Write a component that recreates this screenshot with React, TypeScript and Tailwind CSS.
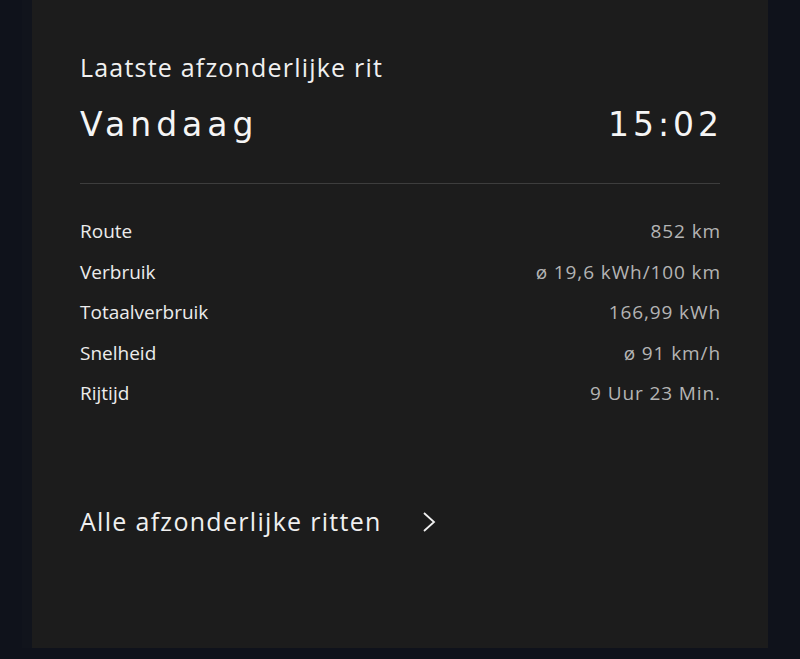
import React from "react";

const rows: [string, string][] = [
  ["Route", "852 km"],
  ["Verbruik", "ø 19,6 kWh/100 km"],
  ["Totaalverbruik", "166,99 kWh"],
  ["Snelheid", "ø 91 km/h"],
  ["Rijtijd", "9 Uur 23 Min."],
];

export default function App() {
  return (
    <div className="w-[800px] h-[659px] bg-[#0f121b] flex overflow-hidden" style={{ fontFamily: '"Open Sans", "Noto Sans", sans-serif' }}>
      <div className="w-[32px] shrink-0 flex justify-end">
        <div className="w-[10px] h-[648px] bg-[#11141c]" />
      </div>
      <div className="w-[736px] h-[648px] bg-[#1c1c1c] shrink-0 px-[48px] pt-[48px]">
        <div className="text-[25px] leading-[38px] tracking-[1.2px] text-[#f0f0f0]">Laatste afzonderlijke rit</div>
        <div className="flex justify-between items-center mt-[16px] text-[#f5f5f5] text-[33px] leading-[46px]" style={{ fontFamily: '"DejaVu Sans", sans-serif', fontWeight: 400 }}>
          <span className="tracking-[5px]">Vandaag</span>
          <span className="tracking-[4px] mr-[-3px]">15:02</span>
        </div>
        <div className="h-px bg-[#3d3d3d] mt-[35px]" />
        <div className="mt-[32px] flex flex-col">
          {rows.map(([l, v]) => (
            <div key={l} className="flex justify-between h-[40.5px] text-[19px] leading-[30px]">
              <span className="text-[#ececec]">{l}</span>
              <span className="text-[#b4b4b4] tracking-[0.9px] mr-[-1px]">{v}</span>
            </div>
          ))}
        </div>
        <div className="mt-[83px] flex items-center text-[25px] tracking-[1.3px] text-[#f0f0f0] leading-[38px]">
          <span>Alle afzonderlijke ritten</span>
          <svg className="ml-[40px] mt-[2px]" width="16" height="22" viewBox="0 0 16 22" fill="none" stroke="#f0f0f0" strokeWidth="1.8">
            <path d="M2 2 L12 11 L2 20" />
          </svg>
        </div>
      </div>
    </div>
  );
}
